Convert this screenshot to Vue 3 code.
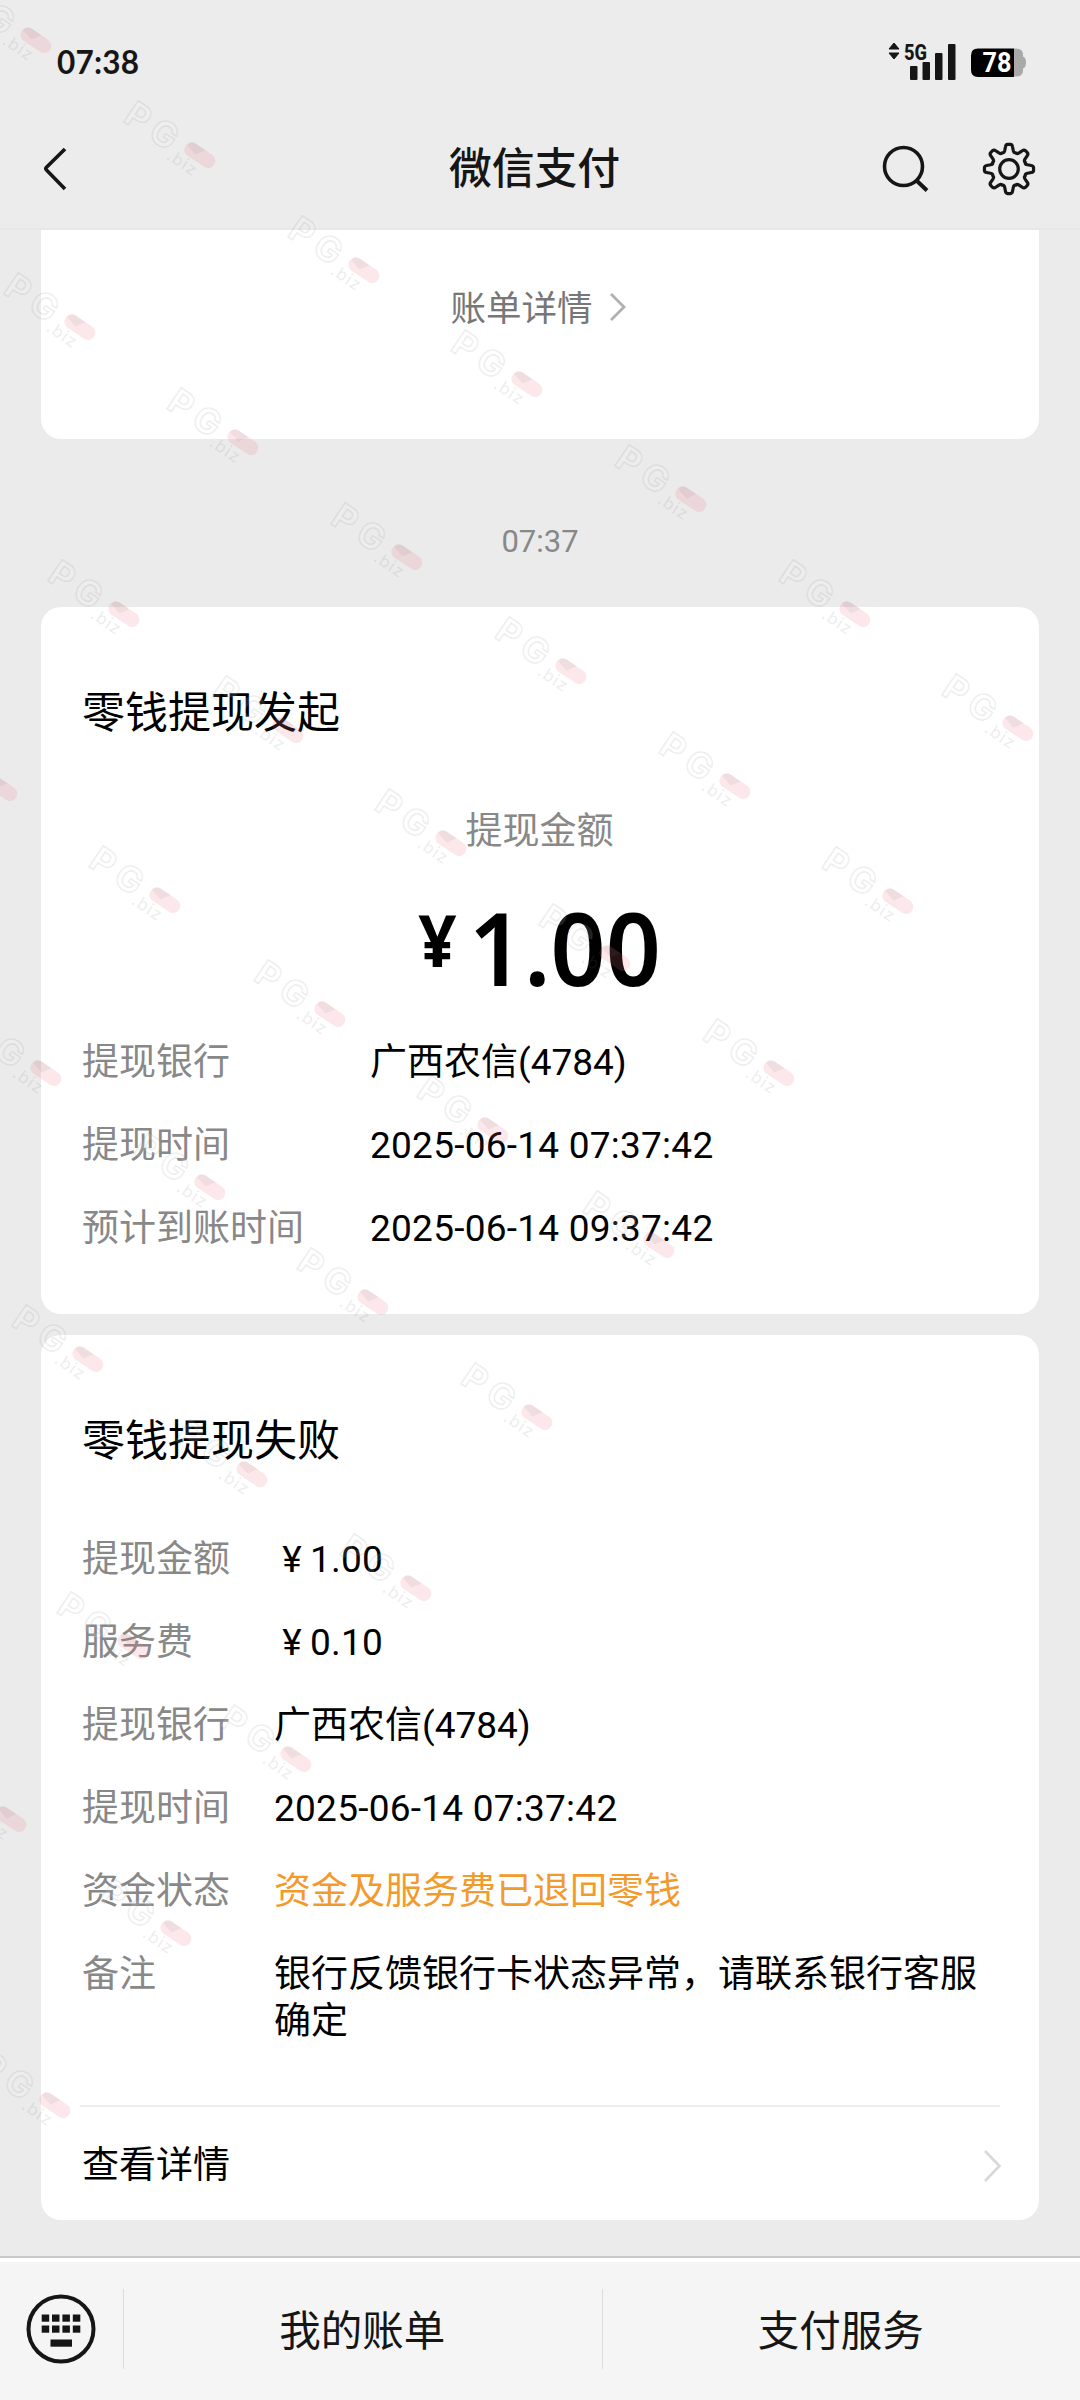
<script setup>
const startRows = [
  { label: '提现银行', value: '广西农信(4784)' },
  { label: '提现时间', value: '2025-06-14 07:37:42', numeric: true },
  { label: '预计到账时间', value: '2025-06-14 09:37:42', numeric: true },
]

const failRows = [
  { label: '提现金额', value: '1.00', money: true, numeric: true },
  { label: '服务费', value: '0.10', money: true, numeric: true },
  { label: '提现银行', value: '广西农信(4784)' },
  { label: '提现时间', value: '2025-06-14 07:37:42', numeric: true },
  { label: '资金状态', value: '资金及服务费已退回零钱', warn: true },
  { label: '备注', value: '银行反馈银行卡状态异常，请联系银行客服确定' },
]

// Outline of the eight-toothed settings gear, centred on the origin
const polar = (r, deg) => {
  const a = (deg * Math.PI) / 180
  return `${(r * Math.cos(a)).toFixed(2)} ${(r * Math.sin(a)).toFixed(2)}`
}
const gear = Array.from({ length: 8 }, (_, i) => {
  const a = i * 45
  return [
    i ? '' : `M${polar(19, a - 13)}`,
    `L${polar(22.6, a - 9)}`,
    `Q${polar(24.6, a - 7.5)} ${polar(24.6, a - 3)}`,
    `L${polar(24.6, a + 3)}`,
    `Q${polar(24.6, a + 7.5)} ${polar(22.6, a + 9)}`,
    `L${polar(19, a + 13)}`,
    `Q${polar(16.6, a + 17)} ${polar(17.6, a + 22.5)}`,
    `Q${polar(16.6, a + 28)} ${polar(19, a + 32)}`,
  ].join('')
}).join('') + 'Z'

const marks = [
  [36, 40], [200, 155], [364, 270], [527, 384], [691, 499], [855, 614], [1018, 728],
  [80, 327], [243, 442], [407, 557], [571, 671], [735, 786], [898, 901],
  [124, 614], [288, 730], [451, 843], [615, 958], [779, 1073],
  [2, 788], [165, 900], [330, 1014], [493, 1130], [659, 1245],
  [46, 1073], [210, 1187], [373, 1302], [537, 1417],
  [88, 1359], [252, 1474], [416, 1588],
  [133, 1646], [296, 1759],
  [11, 1819], [176, 1933],
  [55, 2105],
]
</script>

<template>
  <div class="screen">
    <header class="top">
      <div class="status">
        <span class="clock">07:38</span>
        <svg class="signal" width="142" height="44" viewBox="0 0 142 44">
          <path d="M10 3 L15 9 H5Z M5 13 H15 L10 19Z" fill="#161616" stroke="#161616" stroke-width="1" stroke-linejoin="round" />
          <text x="20" y="19.500" class="net" textLength="23" lengthAdjust="spacingAndGlyphs">5G</text>
          <g fill="#161616">
            <rect x="26" y="26" width="7.500" height="14" rx="1" />
            <rect x="38.500" y="22" width="7.500" height="18" rx="1" />
            <rect x="51" y="13" width="7.500" height="27" rx="1" />
            <rect x="64" y="4" width="7.500" height="36" rx="1" />
          </g>
          <path d="M130 8.500 h2 q7 0 7 6 v2 q3 1 3 6 t-3 6 v2 q0 6 -7 6 h-2z" fill="#a9a9a9" />
          <path d="M130 8.500 h-36 q-7 0 -7 7 v14.500 q0 7 7 7 h36z" fill="#000" />
          <text x="98.500" y="32" class="pct" textLength="29" lengthAdjust="spacingAndGlyphs">78</text>
        </svg>
      </div>
      <div class="nav">
        <svg class="back" width="30" height="50" viewBox="0 0 30 50" fill="none" stroke="#161616" stroke-width="3.600">
          <path d="M25 5 L6.500 23.300 Q5.200 24.700 6.500 26 L25 45" />
        </svg>
        <h1>微信支付</h1>
        <div class="tools">
          <svg width="52" height="54" viewBox="0 0 52 54" fill="none" stroke="#161616" stroke-width="3.600">
            <circle cx="24.500" cy="24.500" r="19" />
            <path d="M37.500 38.500 L48 48.500" stroke-width="4" />
          </svg>
          <svg width="54" height="54" viewBox="-27 -27 54 54" fill="none" stroke="#161616" stroke-width="3.200" stroke-linejoin="round">
            <path :d="gear" />
            <circle r="9.300" />
          </svg>
        </div>
      </div>
    </header>

    <main>
      <section class="card previous">
        <span>账单详情</span>
        <svg width="18" height="32" viewBox="0 0 18 32" fill="none" stroke="#b0b0b0" stroke-width="2.800">
          <path d="M2 3 L15 16 L2 29" />
        </svg>
      </section>

      <time>07:37</time>

      <section class="card start">
        <h2>零钱提现发起</h2>
        <p class="caption">提现金额</p>
        <p class="amount"><span class="yen">¥</span><span>1.00</span></p>
        <dl class="wide">
          <div v-for="row in startRows" :key="row.label" class="row">
            <dt>{{ row.label }}</dt>
            <dd :class="{ numeric: row.numeric }">{{ row.value }}</dd>
          </div>
        </dl>
      </section>

      <section class="card fail">
        <h2>零钱提现失败</h2>
        <dl>
          <div v-for="row in failRows" :key="row.label" class="row">
            <dt>{{ row.label }}</dt>
            <dd :class="{ warn: row.warn, numeric: row.numeric }"><span v-if="row.money" class="unit">¥</span>{{ row.value }}</dd>
          </div>
        </dl>
        <div class="more">
          <span>查看详情</span>
          <svg width="20" height="36" viewBox="0 0 20 36" fill="none" stroke="#d8d8d8" stroke-width="2.600">
            <path d="M2 3 L16.500 18 L2 33" />
          </svg>
        </div>
      </section>
    </main>

    <footer>
      <div class="keyboard">
        <svg width="72" height="72" viewBox="-36 -36 72 72">
          <circle r="32.500" fill="none" stroke="#161616" stroke-width="4" />
          <g fill="#161616">
            <template v-for="y in [-14.500, -3.500]" :key="y">
              <rect v-for="x in [-19.300, -9, 1.400, 11.800]" :key="x" :x="x" :y="y" width="7.500" height="7.200" />
            </template>
            <rect x="-10.500" y="10.500" width="21.500" height="7.200" />
          </g>
        </svg>
      </div>
      <div class="tab">我的账单</div>
      <div class="tab">支付服务</div>
    </footer>

    <svg class="marks" width="1080" height="2400" viewBox="0 0 1080 2400">
      <g v-for="([x, y], i) in marks" :key="i" :transform="`translate(${x} ${y}) rotate(34)`">
        <text v-if="x > 20" x="-84" y="15" class="pg">PG</text>
        <text v-if="x > 10" x="-27" y="22" class="biz">.biz</text>
        <rect x="-17" y="-7" width="34" height="14.500" rx="7" fill="#ee6a7c" fill-opacity=".16" />
        <path d="M-10 -7 L2 -7 L-4 2 L-16 -1 Q-16 -7 -10 -7Z" fill="#777" fill-opacity=".09" />
      </g>
    </svg>
  </div>
</template>

<style>
body {
  margin: 0;
  background: #ebebeb;
}
</style>

<style scoped>
.screen {
  position: relative;
  display: flex;
  flex-direction: column;
  width: 1080px;
  height: 2400px;
  overflow: hidden;
  background: #ebebeb;
  color: #000;
  font-family: Roboto, "Noto Sans CJK SC", sans-serif;
  font-size: 37px;
  line-height: 47px;
}
h1, h2, p, dl, dd {
  margin: 0;
  font-weight: 400;
}
svg {
  display: block;
  flex: none;
}
.top {
  height: 228px;
  border-bottom: 2px solid #e8e8e8;
  background: #ececec;
}
.status {
  display: flex;
  justify-content: space-between;
  align-items: flex-start;
  height: 66px;
  padding: 40px 54px 0 57px;
}
.clock {
  font: 700 31.500px/44px Lato, sans-serif;
  letter-spacing: 0.200px;
  color: #161616;
}
.net {
  font: 800 21.500px Roboto, sans-serif;
  fill: #161616;
}
.pct {
  font: 700 27px Roboto, sans-serif;
  fill: #fff;
}
.nav {
  display: grid;
  grid-template-columns: 1fr auto 1fr;
  align-items: center;
  height: 126px;
  padding: 0 44px 0 40px;
}
h1 {
  margin-right: 7px;
  font-size: 42.800px;
  font-weight: 500;
  color: #161616;
}
.tools {
  display: flex;
  justify-content: flex-end;
  align-items: center;
  gap: 51px;
}
main {
  display: flex;
  flex-direction: column;
  padding: 0 41px;
}
.card {
  box-sizing: border-box;
  border-radius: 20px;
  background: #fff;
}
.previous {
  display: flex;
  justify-content: center;
  gap: 16px;
  height: 209px;
  padding: 56px 3px 0 0;
  border-radius: 0 0 20px 20px;
  font-size: 35.500px;
  color: #777;
}
.previous svg {
  margin-top: 5px;
}
time {
  margin: 79px 0 41px;
  font-size: 31px;
  line-height: 48px;
  text-align: center;
  color: #888;
}
.start {
  height: 707px;
  padding: 80px 42px 0 41px;
}
.fail {
  height: 885px;
  margin-top: 21px;
  padding: 80px 39px 0 41px;
}
h2 {
  font-size: 43px;
  line-height: 52px;
}
.caption {
  margin-top: 69px;
  text-align: center;
  color: #888;
}
.amount {
  display: flex;
  justify-content: center;
  align-items: flex-start;
  gap: 13px;
  margin-top: 32px;
  font-family: "Noto Sans", sans-serif;
  font-size: 102px;
  font-weight: 600;
  line-height: 120px;
  transform: scaleX(0.945);
}
.yen {
  font-size: 71px;
  font-weight: 700;
  line-height: 106px;
}
.wide {
  margin-top: 32px;
}
.fail dl {
  margin-top: 69px;
}
.row {
  display: flex;
  padding-bottom: 36px;
}
dt {
  flex: none;
  width: 192px;
  color: #888;
}
.wide dt {
  width: 288px;
}
.numeric {
  letter-spacing: 0.250px;
}
.warn {
  color: #f39a2d;
}
.unit {
  display: inline-block;
  width: 36px;
  text-align: center;
}
.more {
  display: flex;
  justify-content: space-between;
  align-items: center;
  height: 113px;
  margin: 24px 0 0 -2px;
  padding: 2px 0 0 2px;
  border-top: 2px solid #eee;
}
.more svg {
  margin-right: -3px;
}
footer {
  display: flex;
  align-items: center;
  box-sizing: border-box;
  height: 144px;
  margin-top: auto;
  border-top: 2px solid #c9c9c9;
  box-shadow: inset 0 4px #fff;
  background: #f5f5f5;
  color: #161616;
}
.keyboard {
  width: 98px;
  padding-left: 25px;
}
.tab {
  flex: 1;
  box-sizing: border-box;
  height: 80px;
  padding: 3px 1px 0 0;
  border-left: 1px solid #dcdcdc;
  font-size: 41.500px;
  line-height: 80px;
  text-align: center;
}
.marks {
  position: absolute;
  inset: 0;
  pointer-events: none;
}
.pg {
  font: 700 35px Inter, sans-serif;
  letter-spacing: 7px;
  fill: #fff;
  fill-opacity: 0.150;
  stroke: #777;
  stroke-opacity: 0.120;
  stroke-width: 1.700px;
}
.biz {
  font: 500 17px Inter, sans-serif;
  letter-spacing: 1px;
  fill: #777;
  fill-opacity: 0.130;
}
</style>
